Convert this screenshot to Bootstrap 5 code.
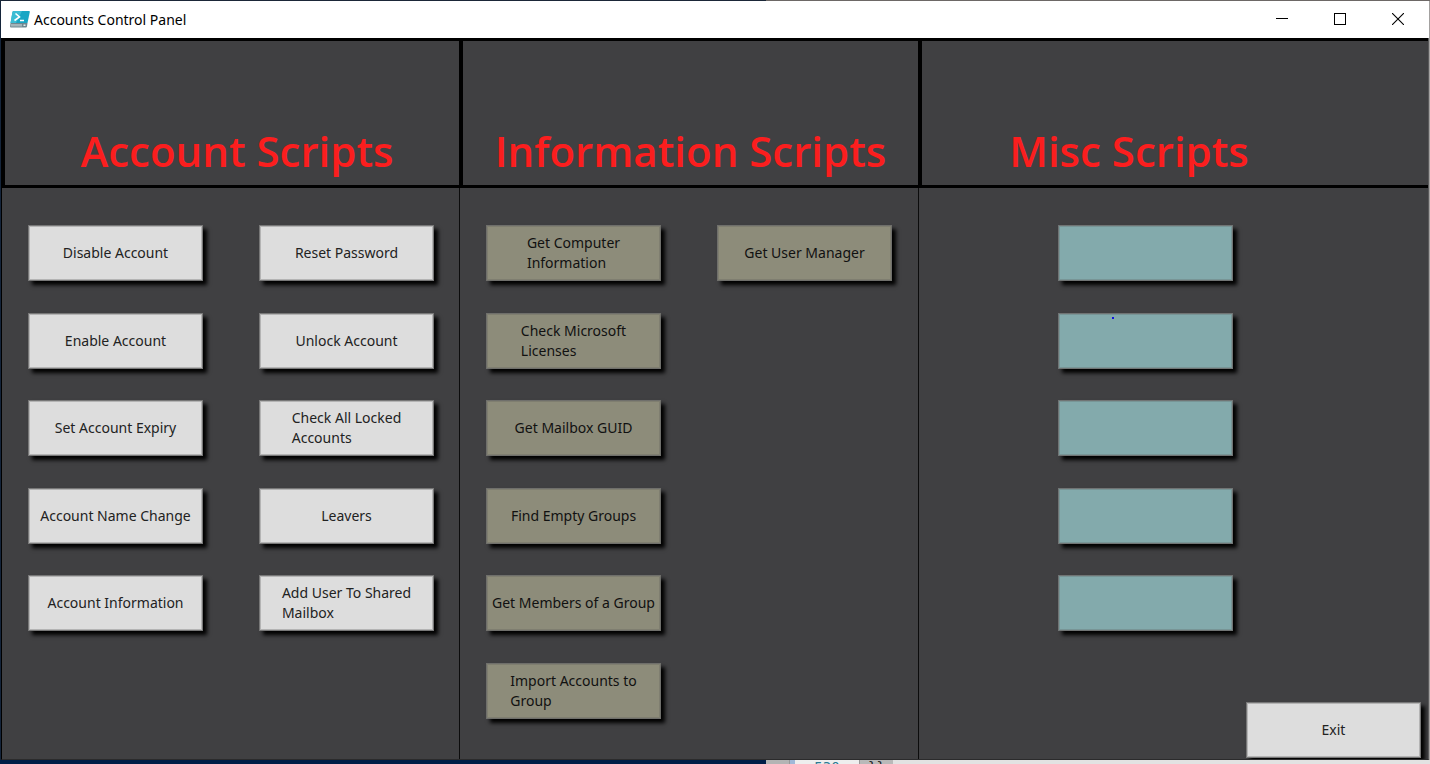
<!DOCTYPE html>
<html lang="en">
<head>
<meta charset="utf-8">
<meta name="viewport" content="width=device-width, initial-scale=1">
<title>Accounts Control Panel</title>
<link href="https://cdn.jsdelivr.net/npm/bootstrap@5.3.0/dist/css/bootstrap.min.css" rel="stylesheet">
<style>
  body { font-family: "Noto Sans", "Open Sans", sans-serif; background: #10203a; color: #111; }
  .desk-top { height: 1px; }
  .desk-top .dark, .desk-bottom .dark { flex: 0 0 766px; }
  .desk-top .dark { background: #1b2738; }
  .desk-top .lite { background: #6d6866; }
  .app-window { border-left: 1px solid #14243a; border-right: 1px solid #a3a1a0; }
  .titlebar { height: 37px; background: #fff; color: #000; padding: 0 2px 0 9px; }
  .titlebar h1 { font-size: 14px; line-height: 20px; font-weight: 400; }
  .win-btn { width: 58px; height: 35px; border: 0; background: transparent; padding: 0; }
  .win-btn svg { display: block; margin: auto; }
  .win-btn:hover { background: #e5e5e5; }
  .panels { background: #404042; border-left: 1px solid #000; border-right: 1px solid #5a5a5b; border-bottom: 1px solid #2b2b2c; }
  .panel-a { flex: 458 1 0; min-width: 0; }
  .panel-b { flex: 459 1 0; min-width: 0; }
  .panel-c { flex: 509 1 0; min-width: 0; }
  .panel-head { height: 150px; border: solid #000; border-width: 3px 1px 3px 3px; padding-bottom: 5px; }
  .panel-head h2 { color: #fb1e1e; font-size: 42px; line-height: 58px; font-weight: 600; font-family: "Open Sans", "Noto Sans", sans-serif; }
  .panel-a .panel-head { padding-left: 10px; }
  .panel-c .panel-head { padding-right: 92px; border-right: 0; }
  .panel-body { display: grid; grid-template-columns: 175px 175px; column-gap: 56px;
    grid-template-rows: repeat(6, minmax(60px, 1fr)) 8px; grid-auto-flow: column;
    align-items: start; padding: 37px 0 1px 26px; overflow: hidden; }
  .panel-a .panel-body, .panel-b .panel-body { border-right: 1px solid #0c0c0c; }
  .panel-c .panel-body { grid-template-columns: 1fr; padding: 37px 7px 1px 0; }
  .panel-c .tile { justify-self: center; margin-right: 50px; }
  .panel-c .tile.exit { grid-row: 6 / 8; grid-column: 1; align-self: end; justify-self: end; margin-right: 0; }
  .tile { position: relative; width: 175px; height: 56px; padding: 0; border: 1px solid #777; background: #ddd; color: #222;
    font-size: 14px; line-height: 20px; box-shadow: inset 0 0 0 1px #b4b4b4, 4px 4px 4px #000; white-space: nowrap; }
  .tile.olive { background: #8d8c7a; border-color: #6f6f6b; color: #111; box-shadow: inset 0 0 0 1px #7f7e70, 4px 4px 4px #000; }
  .tile.teal { background: #83aaac; border-color: #707474; box-shadow: inset 0 0 0 1px #789596, 4px 4px 4px #000; }
  .tile:hover { filter: brightness(1.06); }
  .tile .dot { position: absolute; left: 53px; top: 3px; width: 2px; height: 2px; background: #1414e0; }
  .desk-bottom { height: 4px; overflow: hidden; font: 14px/14px "DejaVu Sans Mono", monospace; }
  .desk-bottom .dark { background: #001d47; }
  .desk-bottom .edge { width: 24px; background: #b4b4b4; border-right: 1px solid #999; }
  .desk-bottom .rail { width: 5px; background: #9fb8d8; }
  .desk-bottom .num { width: 65px; background: #eee; color: #2b7a93; border-right: 1px solid #999; }
  .desk-bottom .code { width: 33px; background: #b9b9b9; color: #222; }
  .desk-bottom .lite { background: #e2e2e2; }
</style>
</head>
<body class="d-flex flex-column min-vh-100">
<div class="desk-top d-flex"><span class="dark"></span><span class="lite flex-fill"></span></div>

<div class="app-window d-flex flex-column flex-grow-1">
  <header class="titlebar d-flex align-items-center">
    <svg width="20" height="17" viewBox="0 0 20 17" aria-hidden="true">
      <path d="M3.500 0H19Q20 0 19.800 1L17.500 12H.5L2.500 1Q2.700 0 3.500 0z" fill="#19a6c4"/>
      <path d="M3.500 0H12L6 12H.5L2.500 1Q2.700 0 3.500 0z" fill="#3cbdd4"/>
      <path d="M.5 12H17.500L17 15.500Q16.800 16.500 16 16.500H1Q0 16.500 .1 15.500z" fill="#6f8790"/>
      <path d="M1 13H12v2.500H1z" fill="#a3b3b8"/>
      <path d="M13.500 13.500h2v1.500h-2z" fill="#e4ecee"/>
      <path d="M5.500 2.500L9.500 6L4.500 9.500M10 9.500H14" fill="none" stroke="#fff" stroke-width="1.600"/>
    </svg>
    <h1 class="mb-0 ms-1 me-auto">Accounts Control Panel</h1>
    <div class="d-flex align-self-start">
      <button class="win-btn" type="button" aria-label="Minimize"><svg width="12" height="12" viewBox="0 0 12 12" shape-rendering="crispEdges"><path d="M0 5.500H12" stroke="#000"/></svg></button>
      <button class="win-btn" type="button" aria-label="Maximize"><svg width="12" height="12" viewBox="0 0 12 12" shape-rendering="crispEdges"><path d="M.5 .5H11.500V11.500H.5z" fill="none" stroke="#000"/></svg></button>
      <button class="win-btn" type="button" aria-label="Close"><svg width="12" height="12" viewBox="0 0 12 12"><path d="M0 0L12 12M12 0L0 12" stroke="#000" stroke-width="1.100"/></svg></button>
    </div>
  </header>

  <main class="panels d-flex flex-grow-1">
    <section class="panel-a d-flex flex-column">
      <div class="panel-head d-flex align-items-end justify-content-center"><h2 class="mb-0 text-nowrap">Account Scripts</h2></div>
      <div class="panel-body flex-grow-1">
        <button class="tile" type="button">Disable Account</button>
        <button class="tile" type="button">Enable Account</button>
        <button class="tile" type="button">Set Account Expiry</button>
        <button class="tile" type="button">Account Name Change</button>
        <button class="tile" style="grid-row: 5 / 8" type="button">Account Information</button>
        <button class="tile" type="button">Reset Password</button>
        <button class="tile" type="button">Unlock Account</button>
        <button class="tile" type="button"><span class="d-inline-block text-start">Check All Locked<br>Accounts</span></button>
        <button class="tile" type="button">Leavers</button>
        <button class="tile" type="button"><span class="d-inline-block text-start">Add User To Shared<br>Mailbox</span></button>
      </div>
    </section>

    <section class="panel-b d-flex flex-column">
      <div class="panel-head d-flex align-items-end justify-content-center"><h2 class="mb-0 text-nowrap">Information Scripts</h2></div>
      <div class="panel-body flex-grow-1">
        <button class="tile olive" type="button"><span class="d-inline-block text-start">Get Computer<br>Information</span></button>
        <button class="tile olive" type="button"><span class="d-inline-block text-start">Check Microsoft<br>Licenses</span></button>
        <button class="tile olive" type="button">Get Mailbox GUID</button>
        <button class="tile olive" type="button">Find Empty Groups</button>
        <button class="tile olive" type="button">Get Members of a Group</button>
        <button class="tile olive" style="grid-row: 6 / 8" type="button"><span class="d-inline-block text-start">Import Accounts to<br>Group</span></button>
        <button class="tile olive" type="button">Get User Manager</button>
      </div>
    </section>

    <section class="panel-c d-flex flex-column">
      <div class="panel-head d-flex align-items-end justify-content-center"><h2 class="mb-0 text-nowrap">Misc Scripts</h2></div>
      <div class="panel-body flex-grow-1">
        <button class="tile teal" type="button" aria-label="Unassigned 1"></button>
        <button class="tile teal" type="button" aria-label="Unassigned 2"><span class="dot"></span></button>
        <button class="tile teal" type="button" aria-label="Unassigned 3"></button>
        <button class="tile teal" type="button" aria-label="Unassigned 4"></button>
        <button class="tile teal" type="button" aria-label="Unassigned 5"></button>
        <button class="tile exit" type="button">Exit</button>
      </div>
    </section>
  </main>
</div>

<div class="desk-bottom d-flex">
  <span class="dark"></span><span class="edge"></span><span class="rail"></span>
  <span class="num text-center">530</span><span class="code text-center">}}</span><span class="lite flex-fill"></span>
</div>
<script src="https://cdn.jsdelivr.net/npm/bootstrap@5.3.0/dist/js/bootstrap.bundle.min.js"></script>
</body>
</html>
